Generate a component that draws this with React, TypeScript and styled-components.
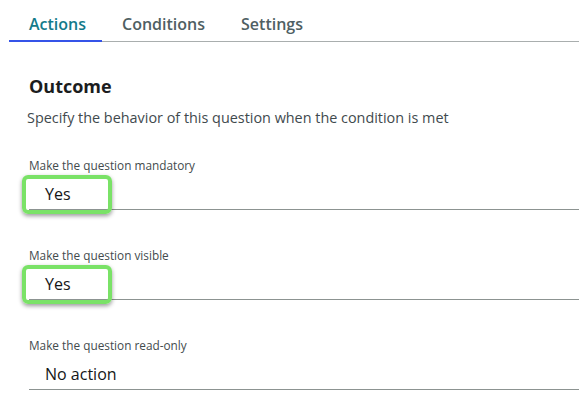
import React from "react";
import styled, { createGlobalStyle } from "styled-components";

const Global = createGlobalStyle`
  html, body { margin: 0; padding: 0; background: #ffffff; }
  body { font-family: "Open Sans", "Noto Sans", sans-serif; }
`;

const Page = styled.div`
  width: 579px;
  height: 403px;
  overflow: hidden;
  background: #fff;
`;

const TabBar = styled.div`
  display: flex;
  margin-left: 9px;
  margin-top: 10px;
  border-bottom: 1px solid #a9aeae;
`;

const Tab = styled.div<{ $active?: boolean }>`
  padding: 3px 16px 5px 20px;
  font-size: 16px;
  font-weight: 600;
  line-height: 22px;
  color: ${(p) => (p.$active ? "#137a8a" : "#4f5f63")};
  border-bottom: 2px solid ${(p) => (p.$active ? "#3553e8" : "transparent")};
  margin-bottom: -1px;
`;

const Content = styled.div`
  padding: 32px 0 0 29px;
  display: flex;
  flex-direction: column;
`;

const Heading = styled.h2`
  margin: 0;
  font-size: 18px;
  font-weight: 700;
  line-height: 24px;
  color: #1b1d1e;
`;

const Subtitle = styled.p`
  margin: 10px 0 0 -2px;
  font-size: 14.4px;
  line-height: 20px;
  color: #3f4a4e;
`;

const Fields = styled.div`
  display: flex;
  flex-direction: column;
  gap: 37px;
  margin-top: 29px;
`;

const Field = styled.div`
  position: relative;
  display: flex;
  flex-direction: column;
`;

const Label = styled.label`
  font-size: 11.8px;
  line-height: 16px;
  color: #434b4d;
`;

const Value = styled.div`
  padding: 10px 0 4px 16px;
  font-size: 16px;
  line-height: 22px;
  color: #141617;
  border-bottom: 1px solid #8c9391;
`;

const Highlight = styled.div`
  position: absolute;
  left: -7px;
  top: 18px;
  width: 90px;
  height: 39px;
  box-sizing: border-box;
  border: 4px solid #7ae267;
  border-radius: 6px;
  box-shadow: 0 2px 4px rgba(0, 0, 0, 0.4);
  pointer-events: none;
`;

const fields = [
  { label: "Make the question mandatory", value: "Yes", highlight: true },
  { label: "Make the question visible", value: "Yes", highlight: true },
  { label: "Make the question read-only", value: "No action", highlight: false },
];

export default function App() {
  return (
    <Page>
      <Global />
      <TabBar>
        <Tab $active>Actions</Tab>
        <Tab>Conditions</Tab>
        <Tab>Settings</Tab>
      </TabBar>
      <Content>
        <Heading>Outcome</Heading>
        <Subtitle>Specify the behavior of this question when the condition is met</Subtitle>
        <Fields>
          {fields.map((f) => (
            <Field key={f.label}>
              <Label>{f.label}</Label>
              <Value>{f.value}</Value>
              {f.highlight && <Highlight />}
            </Field>
          ))}
        </Fields>
      </Content>
    </Page>
  );
}
